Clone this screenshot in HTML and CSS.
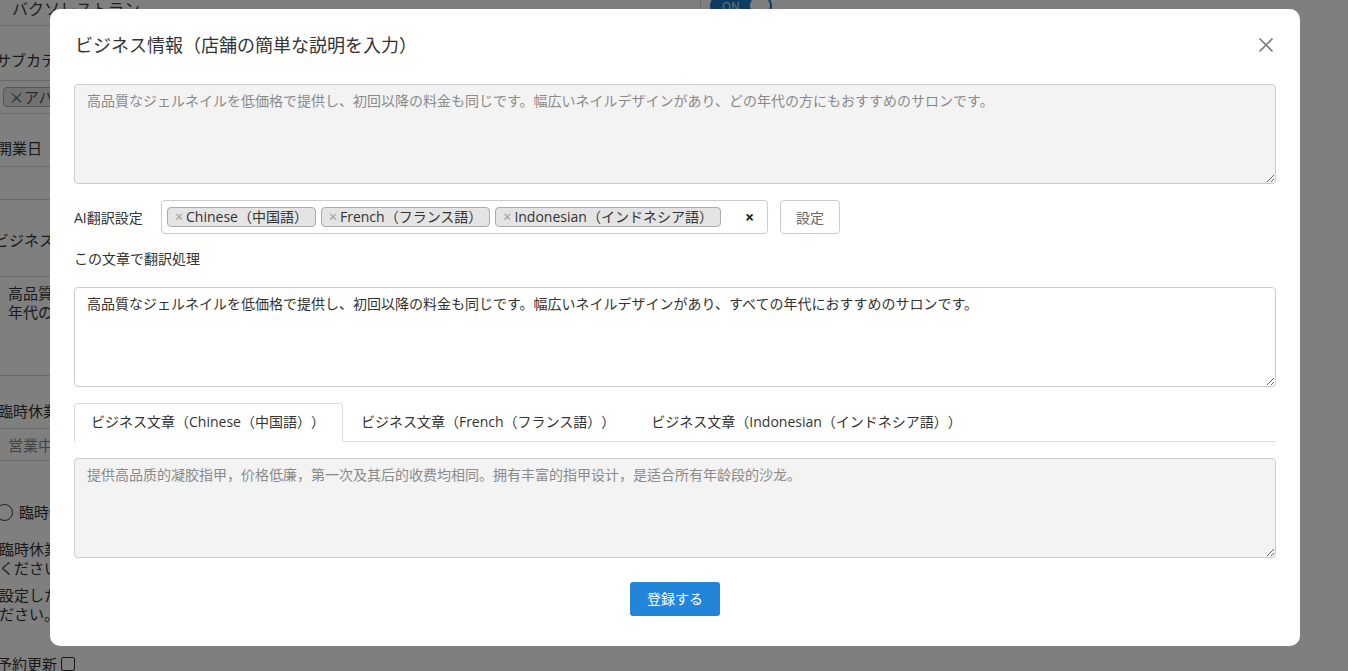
FILE: index.html
```html
<!DOCTYPE html>
<html lang="ja">
<head>
<meta charset="utf-8">
<title>ビジネス情報</title>
<link rel="stylesheet" href="styles.css">
</head>
<body>
<div class="page">
  <div class="bg-row bg-r1">
    <span class="bg-name">バクソレストラン</span>
    <span class="bg-vline"></span>
    <span class="bg-toggle">ON<span class="bg-knob"></span></span>
  </div>
  <div class="bg-row bg-r2"><span class="bg-label">サブカテゴリ</span></div>
  <div class="bg-row bg-r3"><span class="bg-tag">×アバウト</span></div>
  <div class="bg-row bg-r4"><span class="bg-label">開業日</span></div>
  <div class="bg-row bg-r5"></div>
  <div class="bg-row bg-r6"><span class="bg-label">ビジネス情報</span></div>
  <div class="bg-row bg-r7"><p class="bg-desc">高品質なジェルネイルを低価格で提供し<br>年代の方にもおすすめのサロンです。</p></div>
  <div class="bg-r8">
    <div class="bg-label">臨時休業</div>
    <div class="bg-field">営業中</div>
  </div>
  <div class="bg-radio-row"><span class="bg-radio"></span><span>臨時休業</span></div>
  <p class="bg-note">臨時休業の場合は設定して<br>ください。</p>
  <p class="bg-note bg-note2">設定した内容を確認してく<br>ださい。</p>
  <div class="bg-check-row"><span>予約更新</span><span class="bg-check"></span></div>
</div>

<div class="overlay">
  <div class="modal">
    <div class="modal-header">
      <h2 class="modal-title">ビジネス情報（店舗の簡単な説明を入力）</h2>
      <button class="close-btn" type="button" aria-label="閉じる">
        <svg width="16" height="16" viewBox="0 0 16 16"><path d="M1.5 1.5 L14.5 14.5 M14.5 1.5 L1.5 14.5" stroke="#7a7a7a" stroke-width="1.6" fill="none"/></svg>
      </button>
    </div>

    <textarea class="ta ta-disabled" readonly>高品質なジェルネイルを低価格で提供し、初回以降の料金も同じです。幅広いネイルデザインがあり、どの年代の方にもおすすめのサロンです。</textarea>

    <div class="ai-row">
      <span class="ai-label">AI翻訳設定</span>
      <div class="select-box">
        <span class="tag"><span class="tag-x">×</span>Chinese（中国語）</span>
        <span class="tag"><span class="tag-x">×</span>French（フランス語）</span>
        <span class="tag"><span class="tag-x">×</span>Indonesian（インドネシア語）</span>
        <span class="clear-x">×</span>
      </div>
      <button class="set-btn" type="button">設定</button>
    </div>

    <div class="sub-label">この文章で翻訳処理</div>

    <textarea class="ta ta-active" readonly>高品質なジェルネイルを低価格で提供し、初回以降の料金も同じです。幅広いネイルデザインがあり、すべての年代におすすめのサロンです。</textarea>

    <div class="tabs">
      <div class="tab tab-active">ビジネス文章（Chinese（中国語））</div>
      <div class="tab">ビジネス文章（French（フランス語））</div>
      <div class="tab">ビジネス文章（Indonesian（インドネシア語））</div>
    </div>

    <textarea class="ta ta-disabled ta-tab" readonly>提供高品质的凝胶指甲，价格低廉，第一次及其后的收费均相同。拥有丰富的指甲设计，是适合所有年龄段的沙龙。</textarea>

    <div class="footer">
      <button class="submit-btn" type="button">登録する</button>
    </div>
  </div>
</div>
</body>
</html>
```

FILE: styles.css
```css
* { box-sizing: border-box; }

html, body {
  margin: 0;
  padding: 0;
  height: 100%;
  overflow: hidden;
}

body {
  background: #ffffff;
  font-family: "Open Sans", "Noto Sans CJK JP", "Liberation Sans", sans-serif;
  font-size: 14px;
  color: #333333;
  text-spacing-trim: space-all;
}

/* ---------- background page ---------- */
.page {
  margin-left: -6px;
  width: 1360px;
  font-size: 15px;
  line-height: 24px;
  font-family: "Noto Sans CJK JP", sans-serif;
}

.bg-row {
  display: flex;
  align-items: flex-start;
  border-bottom: 1px solid #d6d6d6;
  width: 710px;
}

.bg-r1 {
  margin-top: -11px;
  height: 37px;
  width: 800px;
  border-bottom: none;
  position: relative;
}
.bg-r1::after {
  content: "";
  position: absolute;
  left: 0;
  bottom: 0;
  width: 710px;
  border-bottom: 1px solid #d6d6d6;
}

.bg-name {
  margin: 7px 0 0 18px;
  font-size: 16px;
  color: #444;
  width: 688px;
}

.bg-vline {
  width: 1px;
  height: 36px;
  background: #d6d6d6;
}

.bg-toggle {
  margin: 5px 0 0 9px;
  width: 62px;
  height: 24px;
  border-radius: 12px;
  background: #1a78c8;
  color: #cfe2f5;
  font-size: 12px;
  line-height: 24px;
  display: flex;
  align-items: center;
  padding-left: 12px;
}
.bg-knob {
  width: 20px;
  height: 20px;
  border-radius: 50%;
  background: #ffffff;
  margin-left: auto;
  margin-right: 2px;
}

.bg-label { color: #333; }

.bg-r2 { height: 55px; padding: 22px 0 0 2px; }

.bg-r3 { height: 33px; padding-left: 9px; align-items: center; }
.bg-tag {
  background: #e4e4e4;
  border: 1px solid #aaa;
  border-radius: 4px;
  padding: 0 5px;
  line-height: 18px;
  color: #555;
}

.bg-r4 { height: 53px; padding: 22px 0 0 3px; }
.bg-r5 { height: 33px; }
.bg-r6 { height: 77px; padding: 28px 0 0 0; }

.bg-r7 { height: 99px; }
.bg-desc {
  margin: 6px 0 0 14px;
  line-height: 19px;
  color: #333;
}

.bg-r8 { padding: 23px 0 0 4px; }
.bg-field {
  margin: 5px 0 0 -4px;
  width: 300px;
  height: 33px;
  border: 1px solid #d6d6d6;
  padding-left: 13px;
  line-height: 31px;
  color: #888;
}

.bg-radio-row {
  display: flex;
  align-items: center;
  gap: 6px;
  margin-top: 39px;
  padding-left: 2px;
}
.bg-radio {
  width: 17px;
  height: 17px;
  border: 1.5px solid #333;
  border-radius: 50%;
}

.bg-note {
  margin: 15px 0 0 5px;
  line-height: 19px;
}
.bg-note2 { margin-top: 8px; }

.bg-check-row {
  display: flex;
  align-items: center;
  gap: 4px;
  margin-top: 29px;
  padding-left: 3px;
}
.bg-check {
  width: 14px;
  height: 14px;
  border: 1.5px solid #333;
  border-radius: 2px;
}

/* ---------- overlay & modal ---------- */
.overlay {
  position: fixed;
  inset: 0;
  background: rgba(0, 0, 0, 0.5);
  padding-top: 9px;
  padding-left: 50px;
}

.modal {
  width: 1250px;
  height: 637px;
  background: #ffffff;
  border-radius: 10px;
  padding: 24px 24px 30px 24px;
  display: flex;
  flex-direction: column;
}

.modal-header {
  display: flex;
  align-items: center;
  justify-content: space-between;
  height: 24px;
  margin-bottom: 27px;
}

.modal-title {
  margin: 0 0 0 1px;
  font-size: 18px;
  font-weight: normal;
  line-height: 24px;
  color: #333;
}

.close-btn {
  border: none;
  background: none;
  padding: 0;
  margin-right: 2px;
  width: 16px;
  height: 16px;
  display: flex;
  cursor: pointer;
}

.ta {
  display: block;
  width: 100%;
  height: 100px;
  flex: none;
  border: 1px solid #cccccc;
  border-radius: 4px;
  padding: 6px 12px;
  font-family: inherit;
  font-size: 14px;
  line-height: 20px;
  text-spacing-trim: space-all;
  resize: vertical;
  outline: none;
}
.ta-disabled {
  background: #f3f3f3;
  color: #8a8a8a;
}
.ta-active {
  background: #ffffff;
  color: #333333;
}

/* AI translation row */
.ai-row {
  display: flex;
  align-items: center;
  margin-top: 16px;
  height: 34px;
}
.ai-label {
  width: 87px;
  flex: none;
  color: #333;
}
.select-box {
  width: 607px;
  height: 34px;
  border: 1px solid #cccccc;
  border-radius: 4px;
  display: flex;
  align-items: center;
  gap: 5px;
  padding: 0 5px;
}
.tag {
  display: inline-flex;
  align-items: center;
  height: 20px;
  background: #e4e4e4;
  border: 1px solid #aaaaaa;
  border-radius: 4px;
  padding: 0 7px 0 7px;
  color: #333;
  font-size: 14px;
  line-height: 18px;
  white-space: nowrap;
}
.tag-x {
  color: #999;
  margin-right: 3px;
}
.clear-x {
  margin-left: 19px;
  font-weight: bold;
  font-size: 16px;
  color: #222;
}
.set-btn {
  margin-left: 12px;
  width: 60px;
  height: 34px;
  border: 1px solid #cccccc;
  border-radius: 4px;
  background: #ffffff;
  color: #666;
  font-family: inherit;
  font-size: 14px;
  padding: 0;
}

.sub-label {
  margin-top: 15px;
  line-height: 20px;
  margin-bottom: 18px;
  color: #333;
}

/* tabs */
.tabs {
  display: flex;
  margin-top: 16px;
  height: 39px;
  border-bottom: 1px solid #dddddd;
  flex: none;
}
.tab {
  height: 39px;
  padding: 0 17px 3px 16px;
  border: 1px solid transparent;
  border-radius: 4px 4px 0 0;
  display: flex;
  align-items: center;
  color: #333;
  white-space: nowrap;
}
.tab + .tab { padding-left: 17px; }
.tab-active {
  border-color: #dddddd;
  border-bottom-color: #ffffff;
  background: #ffffff;
}

.ta-tab { margin-top: 16px; }

.footer {
  margin-top: 24px;
  display: flex;
  justify-content: center;
}
.submit-btn {
  width: 90px;
  height: 34px;
  border: none;
  border-radius: 3px;
  background: #2185d9;
  color: #ffffff;
  font-family: inherit;
  font-size: 14px;
  padding: 0 0 2px 0;
}
```
